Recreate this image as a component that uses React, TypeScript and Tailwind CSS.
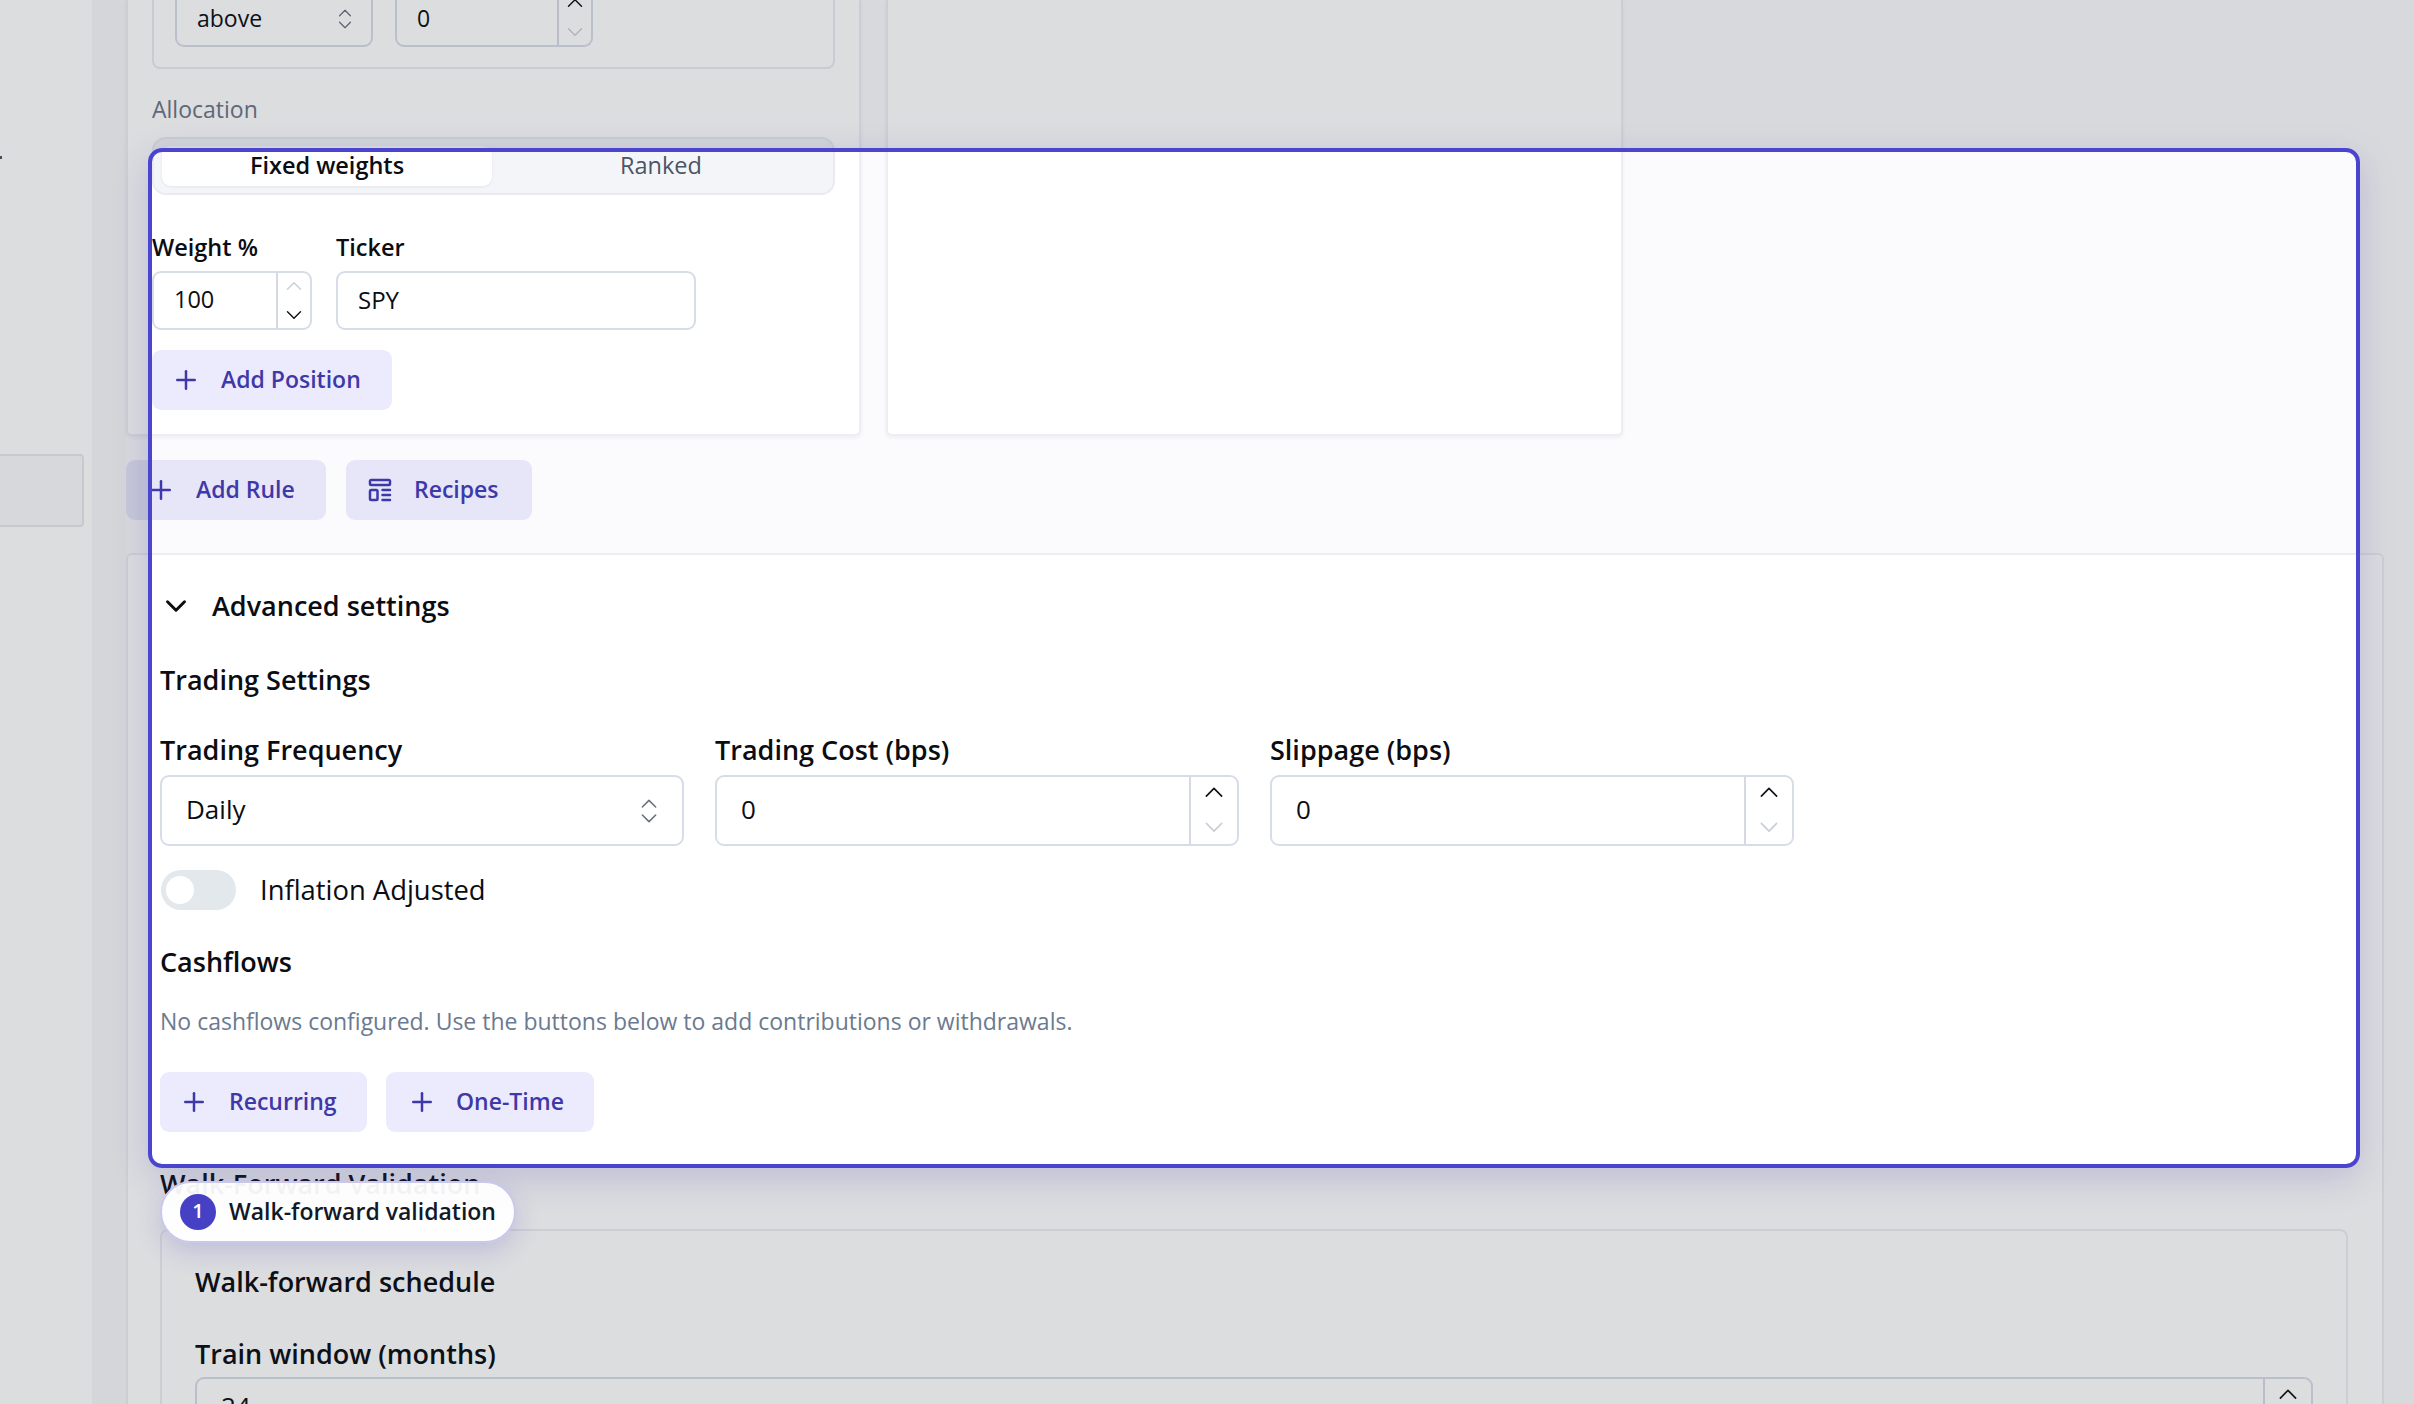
import { ChevronDown, ChevronUp, ChevronsUpDown, Plus } from "lucide-react";
import { TbTemplate } from "react-icons/tb";
import type { ReactNode } from "react";

const SoftButton = ({
  icon,
  label,
  className,
}: {
  icon: ReactNode;
  label: string;
  className: string;
}) => (
  <button
    className={`flex h-[60px] items-center rounded-[9px] text-[23px] font-semibold text-[#3f38a8] ${className}`}
  >
    {icon}
    <span className="-mt-[1px]">{label}</span>
  </button>
);

const PlusIcon = () => <Plus size={30} strokeWidth={2} className="shrink-0" />;

const NumberBox = ({
  value,
  className,
  textClass,
  stepClass,
  iconSize,
  upDim,
  downDim,
}: {
  value: string;
  className: string;
  textClass: string;
  stepClass: string;
  iconSize: number;
  upDim?: boolean;
  downDim?: boolean;
}) => (
  <div
    className={`flex overflow-hidden rounded-[9px] border-2 border-[#d7dde8] bg-white ${className}`}
  >
    <div className={`flex flex-1 items-center text-[#0c0e13] ${textClass}`}>
      {value}
    </div>
    <div
      className={`flex flex-col items-center justify-center border-l-2 border-[#d5d9e3] ${stepClass}`}
    >
      <ChevronUp
        size={iconSize}
        strokeWidth={1.3}
        className={upDim ? "text-[#c9ced6]" : "text-[#111318]"}
      />
      <ChevronDown
        size={iconSize}
        strokeWidth={1.3}
        className={downDim ? "text-[#c9ced6]" : "text-[#111318]"}
      />
    </div>
  </div>
);

const Field = ({ label, children }: { label: string; children: ReactNode }) => (
  <div className="w-[524px]">
    <div className="h-[30px] text-[27px] leading-[28px] font-semibold text-[#0b0d12]">
      {label}
    </div>
    <div className="mt-[9px]">{children}</div>
  </div>
);

export default function App() {
  return (
    <div className="relative h-[1404px] w-[2414px] overflow-hidden bg-[#fbfbfd] font-['Open_Sans',sans-serif] text-[#0b0d12]">
      <div className="flex h-full">
        {/* Sidebar */}
        <div className="w-[92px] shrink-0 bg-white">
          <div className="mt-[156px] h-[3px] w-[2px] bg-[#4b5563]" />
          <div className="mt-[295px] h-[73px] w-[84px] rounded-r-[4px] border-2 border-l-0 border-[#e6e8ef] bg-[#f8f9fb]" />
        </div>
        <div className="w-[34px] shrink-0 bg-[#f7f7f8]" />

        {/* Main */}
        <div className="min-w-0 flex-1 pr-[30px]">
          <div className="flex h-[436px] gap-[25px]">
            <div className="h-full w-[735px] rounded-b-[6px] border-2 border-t-0 border-[#edeef3] bg-white px-[24px] shadow-[0_2px_4px_rgba(30,35,60,0.06)]">
              <div className="flex h-[69px] w-[683px] items-end gap-[22px] rounded-b-[8px] border-2 border-t-0 border-[#e9eaf0] pb-[20px] pl-[21px]">
                <div className="flex h-[70px] w-[198px] items-center justify-between rounded-b-[9px] border-2 border-t-0 border-[#d7dde8] pr-[13px] pl-[20px] text-[23px]">
                  <span className="pt-[14px]">above</span>
                  <ChevronsUpDown size={26} strokeWidth={1.2} className="mt-[16px] text-[#6b7280]" />
                </div>
                <div className="flex h-[70px] w-[198px] rounded-b-[9px] border-2 border-t-0 border-[#d7dde8]">
                  <span className="flex-1 pt-[24px] pl-[20px] text-[23px]">0</span>
                  <div className="flex w-[34px] flex-col items-center justify-end border-l-2 border-[#d5d9e3]">
                    <ChevronUp size={26} strokeWidth={1.3} className="mb-[3px]" />
                    <ChevronDown size={26} strokeWidth={1.3} className="text-[#c9ced6]" />
                  </div>
                </div>
              </div>

              <div className="mt-[26px] h-[30px] text-[23px] leading-[28px] text-[#6b7485]">
                Allocation
              </div>

              <div className="mt-[12px] flex h-[58px] w-[683px] gap-[1px] rounded-[14px] border-2 border-[#e9ebf0] bg-[#f4f5f9] pt-[7px] pl-[8px]">
                <div className="flex h-[40px] w-[330px] items-center justify-center rounded-[9px] bg-white pb-[1px] text-[23.5px] font-semibold shadow-[0_1px_3px_rgba(30,35,60,0.08)]">
                  Fixed weights
                </div>
                <div className="flex h-[40px] w-[336px] items-center justify-center pb-[1px] text-[23.5px] font-medium text-[#4b5563]">
                  Ranked
                </div>
              </div>

              <div className="mt-[37px] flex gap-[24px]">
                <div className="w-[160px]">
                  <div className="h-[30px] text-[23.5px] leading-[30px] font-semibold">Weight %</div>
                  <NumberBox
                    value="100"
                    className="mt-[9px] h-[59px]"
                    textClass="pl-[20px] pb-[1px] text-[23.5px]"
                    stepClass="w-[34px] gap-[3px]"
                    iconSize={26}
                    upDim
                  />
                </div>
                <div className="w-[360px]">
                  <div className="h-[30px] text-[23.5px] leading-[30px] font-semibold">Ticker</div>
                  <div className="mt-[9px] flex h-[59px] items-center rounded-[9px] border-2 border-[#d7dde8] pb-[1px] pl-[20px] text-[24px]">
                    SPY
                  </div>
                </div>
              </div>

              <SoftButton
                icon={<PlusIcon />}
                label="Add Position"
                className="mt-[20px] w-[240px] gap-[20px] bg-[#ecebfd] pl-[19px]"
              />
            </div>
            <div className="h-full w-[737px] rounded-b-[6px] border-2 border-t-0 border-[#edeef3] bg-white shadow-[0_2px_4px_rgba(30,35,60,0.06)]" />
          </div>

          <div className="mt-[24px] flex gap-[20px]">
            <SoftButton
              icon={<PlusIcon />}
              label="Add Rule"
              className="w-[200px] gap-[20px] bg-[#e6e6f8] pl-[20px]"
            />
            <SoftButton
              icon={<TbTemplate size={30} className="shrink-0" />}
              label="Recipes"
              className="w-[186px] gap-[19px] bg-[#e6e6f8] pl-[19px]"
            />
          </div>

          {/* Advanced settings */}
          <div className="mt-[33px] h-[900px] rounded-t-[6px] border-2 border-b-0 border-[#eceef2] bg-white pt-[34px] pr-[34px] pl-[32px]">
            <div className="flex h-[34px] items-center gap-[19px] text-[27px] font-semibold">
              <ChevronDown size={34} strokeWidth={2.1} className="-ml-[1px]" />
              Advanced settings
            </div>

            <div className="mt-[41px] h-[32px] text-[27px] leading-[32px] font-semibold">
              Trading Settings
            </div>

            <div className="mt-[40px] flex gap-[31px]">
              <Field label="Trading Frequency">
                <div className="flex h-[71px] items-center justify-between rounded-[9px] border-2 border-[#d7dde8] pr-[17px] pl-[24px] text-[26px]">
                  <span className="-mt-[2px]">Daily</span>
                  <ChevronsUpDown size={32} strokeWidth={1.2} className="text-[#6b7280]" />
                </div>
              </Field>
              <Field label="Trading Cost (bps)">
                <NumberBox
                  value="0"
                  className="h-[71px]"
                  textClass="pl-[24px] pb-[3px] text-[26px]"
                  stepClass="w-[48px] gap-[4px] pb-[2px]"
                  iconSize={34}
                  downDim
                />
              </Field>
              <Field label="Slippage (bps)">
                <NumberBox
                  value="0"
                  className="h-[71px]"
                  textClass="pl-[24px] pb-[3px] text-[26px]"
                  stepClass="w-[48px] gap-[4px] pb-[2px]"
                  iconSize={34}
                  downDim
                />
              </Field>
            </div>

            <div className="mt-[24px] flex h-[40px] items-center gap-[24px]">
              <div className="ml-[1px] flex h-[40px] w-[75px] items-center rounded-full bg-[#e3e8ec] pl-[5px]">
                <div className="h-[28px] w-[28px] rounded-full bg-white" />
              </div>
              <span className="text-[27.4px] leading-[36px]">Inflation Adjusted</span>
            </div>

            <div className="mt-[36px] h-[32px] text-[27px] leading-[32px] font-semibold">
              Cashflows
            </div>
            <div className="mt-[28px] h-[30px] text-[23px] leading-[30px] text-[#6b7a90]">
              No cashflows configured. Use the buttons below to add contributions or withdrawals.
            </div>

            <div className="mt-[36px] flex gap-[19px]">
              <SoftButton
                icon={<PlusIcon />}
                label="Recurring"
                className="w-[207px] gap-[20px] bg-[#ecebfd] pl-[19px]"
              />
              <SoftButton
                icon={<PlusIcon />}
                label="One-Time"
                className="w-[208px] gap-[19px] bg-[#ecebfd] pl-[21px]"
              />
            </div>

            <div className="mt-[36px] h-[32px] text-[27px] leading-[32px] font-semibold">
              Walk-Forward Validation
            </div>

            <div className="mt-[29px] h-[400px] rounded-[8px] border-2 border-[#eceef2] bg-white px-[33px] pt-[35px]">
              <div className="h-[32px] text-[27px] leading-[32px] font-semibold">
                Walk-forward schedule
              </div>
              <div className="mt-[41px] h-[30px] text-[27px] leading-[30px] font-semibold">
                Train window (months)
              </div>
              <NumberBox
                value="24"
                className="mt-[8px] h-[71px]"
                textClass="pl-[24px] pb-[12px] text-[26px]"
                stepClass="w-[48px] gap-[4px] pb-[2px]"
                iconSize={34}
              />
            </div>
          </div>
        </div>
      </div>

      {/* Tour scrim and spotlight */}
      <div className="absolute top-[148px] left-[148px] h-[1020px] w-[2212px] rounded-[14px] border-4 border-[#4a44cf] shadow-[0_0_0_3000px_rgba(30,38,50,0.155),0_10px_36px_rgba(70,64,196,0.2)]" />

      <div className="absolute top-[1181px] left-[160px] flex h-[62px] w-[356px] items-center gap-[13px] rounded-full border-2 border-[#c9c7ec] bg-white/95 pl-[18px] shadow-[0_8px_26px_rgba(70,64,196,0.2)]">
        <span className="flex h-[36px] w-[36px] items-center justify-center rounded-full bg-[#4640c4] pb-[2px] text-[20px] font-semibold text-white">
          1
        </span>
        <span className="-mt-[2px] text-[23px] font-semibold text-[#111827]">Walk-forward validation</span>
      </div>
    </div>
  );
}
